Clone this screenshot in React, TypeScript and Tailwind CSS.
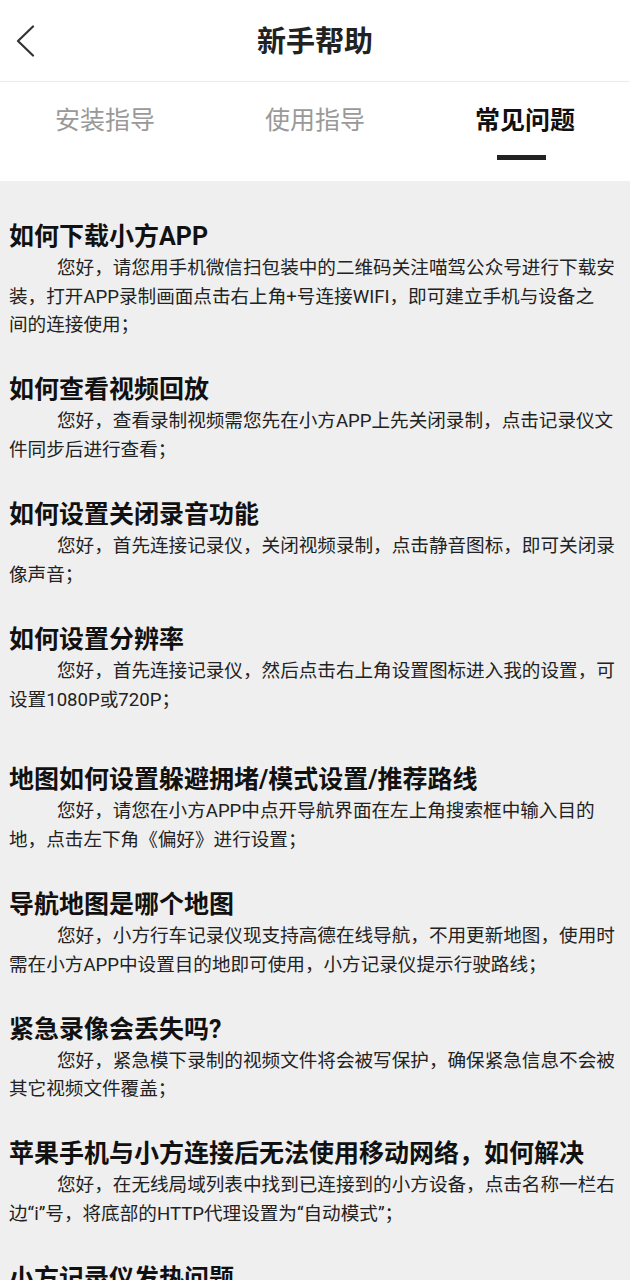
import React from "react";

const items: { t: string; b: string[]; extra?: boolean }[] = [
  {
    t: "如何下载小方APP",
    b: [
      "您好，请您用手机微信扫包装中的二维码关注喵驾公众号进行下载安装，打开APP录制画面点击右上角+号连接WIFI，即可建立手机与设备之",
      "间的连接使用；",
    ],
  },
  {
    t: "如何查看视频回放",
    b: ["您好，查看录制视频需您先在小方APP上先关闭录制，点击记录仪文件同步后进行查看；"],
  },
  {
    t: "如何设置关闭录音功能",
    b: ["您好，首先连接记录仪，关闭视频录制，点击静音图标，即可关闭录像声音；"],
  },
  {
    t: "如何设置分辨率",
    b: ["您好，首先连接记录仪，然后点击右上角设置图标进入我的设置，可设置1080P或720P；"],
    extra: true,
  },
  {
    t: "地图如何设置躲避拥堵/模式设置/推荐路线",
    b: ["您好，请您在小方APP中点开导航界面在左上角搜索框中输入目的地，点击左下角《偏好》进行设置；"],
  },
  {
    t: "导航地图是哪个地图",
    b: ["您好，小方行车记录仪现支持高德在线导航，不用更新地图，使用时需在小方APP中设置目的地即可使用，小方记录仪提示行驶路线；"],
  },
  {
    t: "紧急录像会丢失吗?",
    b: ["您好，紧急模下录制的视频文件将会被写保护，确保紧急信息不会被其它视频文件覆盖；"],
  },
  {
    t: "苹果手机与小方连接后无法使用移动网络，如何解决",
    b: ["您好，在无线局域列表中找到已连接到的小方设备，点击名称一栏右边“i”号，将底部的HTTP代理设置为“自动模式”；"],
  },
  {
    t: "小方记录仪发热问题",
    b: ["您好，记录仪在长时间工作时会有一定的发热，属于正常现象；"],
  },
];

export default function App() {
  return (
    <div
      className="w-[630px] h-[1280px] overflow-hidden flex flex-col bg-white"
      style={{ fontFamily: 'Roboto, "Noto Sans CJK SC", sans-serif' }}
    >
      <div className="relative h-[82px] flex items-center justify-center pt-[4px] border-b border-[#ececec] shrink-0">
        <div className="absolute left-[16px] top-[25px]">
          <svg width="20" height="32" viewBox="0 0 20 32" fill="none">
            <path d="M17 1.5 L2 16 L17 30.5" stroke="#333" strokeWidth="2.2" strokeLinecap="round" strokeLinejoin="round" />
          </svg>
        </div>
        <span className="text-[29px] font-bold text-[#222] leading-none">新手帮助</span>
      </div>
      <div className="h-[99px] grid grid-cols-3 shrink-0">
        {["安装指导", "使用指导", "常见问题"].map((s, i) => (
          <div key={s} className="flex flex-col items-center pt-[23px]">
            <span
              className={
                "text-[25px] leading-[32px] " +
                (i === 2 ? "font-bold text-[#111]" : "text-[#999]")
              }
            >
              {s}
            </span>
            {i === 2 && <div className="mt-[18px] mr-[8px] w-[49px] h-[5px] bg-[#222]" />}
          </div>
        ))}
      </div>
      <div className="flex-1 bg-[#efefef] pl-[9px] pr-[13px] pt-[38px] overflow-hidden">
        {items.map((it) => (
          <div key={it.t} className={it.extra ? "mb-[48px]" : "mb-[32.3px]"}>
            <h2 className="text-[25px] leading-[35px] font-bold text-[#111]">{it.t}</h2>
            <p className="text-[18.6px] leading-[28.7px] text-[#222] indent-[48px]">
              {it.b.map((line, k) => (
                <React.Fragment key={k}>
                  {k > 0 && <br />}
                  {line}
                </React.Fragment>
              ))}
            </p>
          </div>
        ))}
      </div>
    </div>
  );
}
